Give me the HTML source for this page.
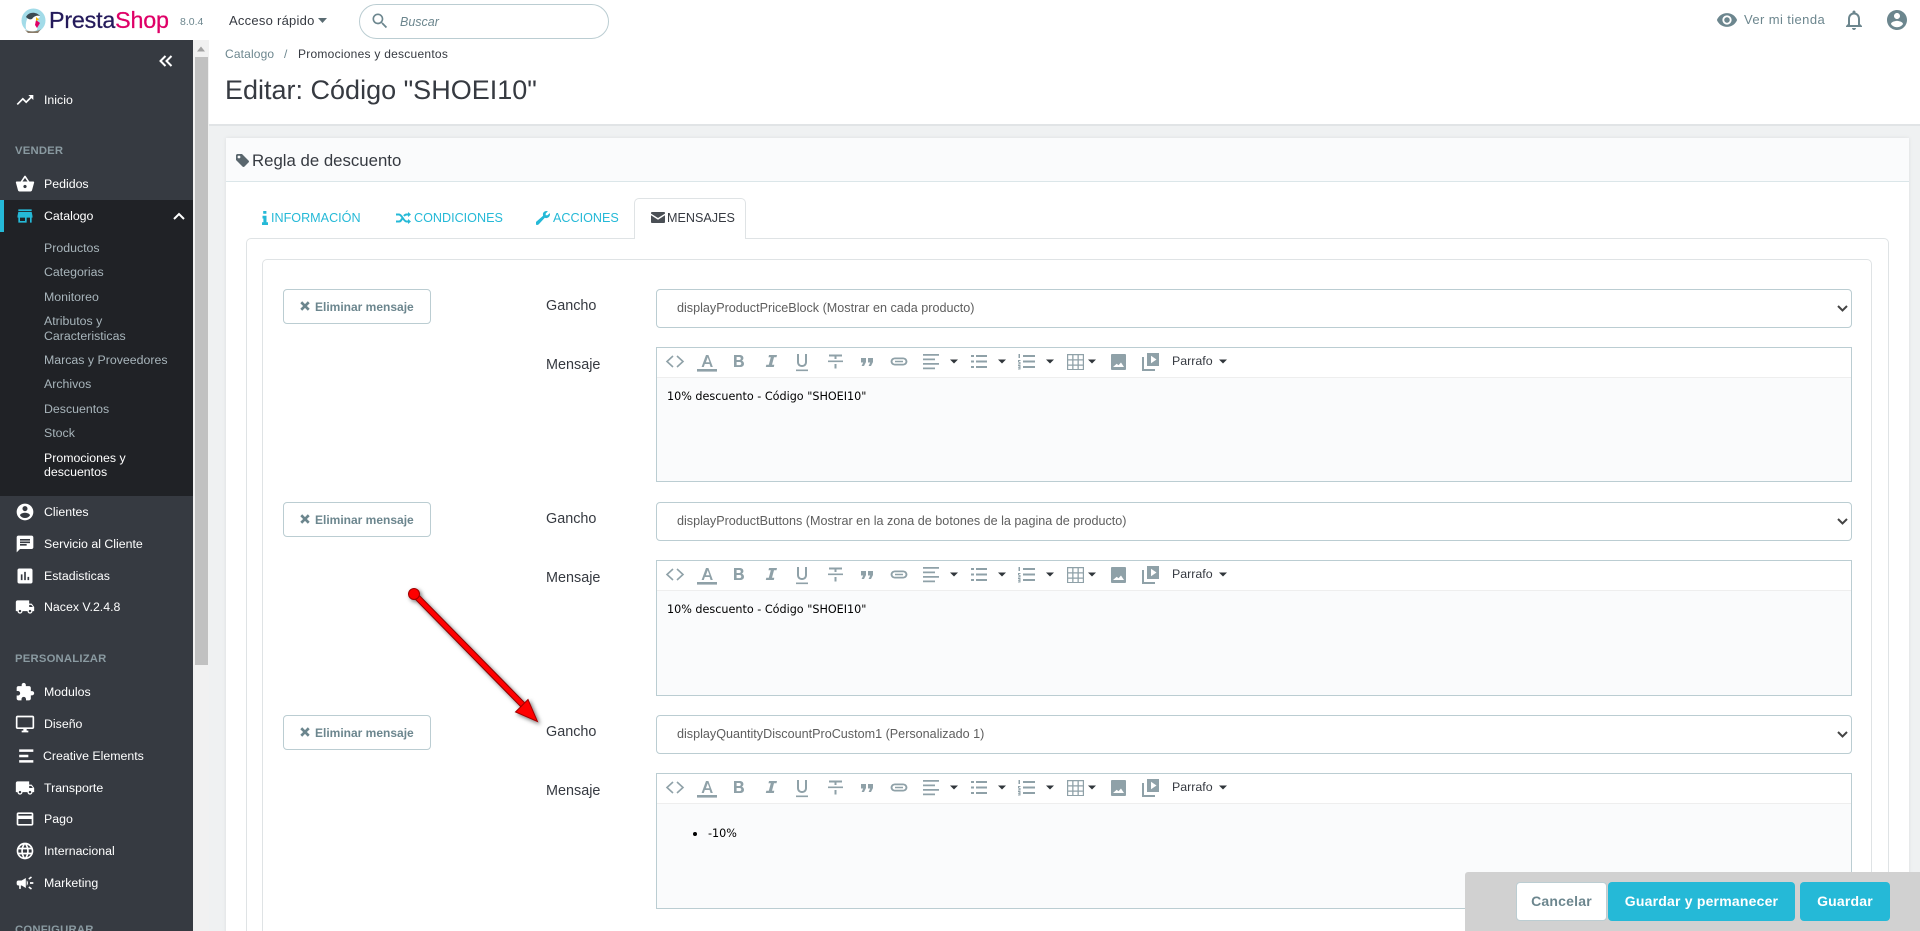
<!DOCTYPE html>
<html lang="es"><head><meta charset="utf-8"><title>Editar: Código "SHOEI10"</title>
<style>
html,body{margin:0;padding:0;width:1920px;height:931px;overflow:hidden;background:#eff1f2;font-family:"Liberation Sans",Arial,sans-serif}
#wrap{position:absolute;left:0;top:0;width:1920px;height:931px;overflow:hidden;background:#eff1f2}
.a{position:absolute}
.t{position:absolute;white-space:nowrap;line-height:16px;height:16px}
.s{font-size:12.35px;color:#fff;left:44px;margin-top:1px}
.u{font-size:12.35px;color:#a8b5bb;left:44px;margin-top:1px}
.h{font-size:11.3px;font-weight:bold;color:#8a9aa1;left:15px;letter-spacing:.2px;margin-top:1px}
.i{position:absolute;left:15px;width:20px;height:20px;fill:#fff;margin-top:1px}
.box{position:absolute;box-sizing:border-box;background:#fff}
.del{position:absolute;left:283px;width:148px;height:35px;box-sizing:border-box;border:1px solid #bbcdd2;border-radius:4px;background:#fff;color:#6c868e;font-size:12px;font-weight:bold;line-height:34px;padding-left:31px}
.sel{position:absolute;left:656px;width:1196px;height:39px;box-sizing:border-box;border:1px solid #bbcdd2;border-radius:4px;background:#fff;color:#5e5e5e;font-size:12.6px;line-height:36px;padding-left:20px}
.lab{position:absolute;left:546px;font-size:14.4px;color:#363a41;line-height:18px;white-space:nowrap;margin-top:1px}
.ed{position:absolute;left:656px;width:1196px;box-sizing:border-box;border:1px solid #bbcdd2;background:#fafbfc;overflow:hidden}
.tb{position:absolute;left:0;top:0;width:100%;height:29px;background:#fff;border-bottom:1px solid #eee}
.par{position:absolute;left:515px;top:5px;font-size:12.4px;line-height:16px;color:#363a41}
.ct{position:absolute;left:10px;top:41px;font:11.2px/16px "DejaVu Sans",sans-serif;color:#000;white-space:nowrap}
.tab{position:absolute;top:210px;font-size:12.6px;line-height:16px;color:#25b9d7;white-space:nowrap}
.btn{position:absolute;top:882px;height:39px;box-sizing:border-box;border-radius:4px;line-height:39px;text-align:center;font-size:14px;font-weight:bold;color:#fff;background:#25b9d7;letter-spacing:.2px}
</style></head><body><div id="wrap">
<svg width="0" height="0" style="position:absolute"><defs>
<symbol id="tbi" viewBox="656 347 600 30">
<g fill="none" stroke="#8fa1a8" stroke-width="1.6"><path d="M673 356l-6 5.500 6 5.500M677 356l6 5.500-6 5.500"/></g>
<g fill="#8fa1a8">
<path d="M706 355h2.400l4.400 12h-2.200l-1-3h-4.800l-1 3h-2.200zm-.1 7.300h3.600l-1.800-5z"/><rect x="697" y="369" width="20" height="2.600"/>
<path d="M734 355h5.600c2.400 0 3.800 1.200 3.800 3.100 0 1.200-.6 2.100-1.600 2.600 1.300.4 2.200 1.500 2.200 3 0 2.100-1.600 3.300-4 3.300h-6zm2.600 2v3h2.600c1 0 1.600-.6 1.600-1.500s-.6-1.500-1.600-1.500zm0 5v3.100h3c1 0 1.700-.6 1.700-1.550s-.7-1.550-1.700-1.550z"/>
<path d="M769 355h8l-.5 2.200h-2.500l-2 7.600h2.300l-.5 2.200h-8l.5-2.200h2.500l2-7.600h-2.300z"/>
<path d="M797 354h2v8c0 2 1.300 3 3 3s3-1 3-3v-8h2v8c0 3.300-2.300 5-5 5s-5-1.700-5-5zM796 369.500h12v1.600h-12z"/>
<path d="M829 354.500h13v2h-5.500v2.500h-2v-2.500h-5.500zM828 360.500h15v1.600h-15zM834.500 364h2v4.500h-2z"/>
<path d="M861 358h5v4l-2 4h-2.400l1.600-3.500h-2.200zM868 358h5v4l-2 4h-2.400l1.600-3.500h-2.200z"/>
<path d="M895 357.500h4v1.700h-4c-1.300 0-2.500 1-2.500 2.300s1.200 2.300 2.500 2.300h4v1.700h-4c-2.400 0-4.400-1.800-4.400-4s2-4 4.400-4zM903 357.500c2.400 0 4.400 1.800 4.400 4s-2 4-4.400 4h-4v-1.700h4c1.300 0 2.500-1 2.500-2.300s-1.200-2.300-2.500-2.300h-4v-1.700zM895 360.700h8v1.600h-8z"/>
<path d="M923 354h16v1.700h-16zM923 358.500h12v1.700h-12zM923 363h16v1.700h-16zM923 367.500h12v1.700h-12z"/>
<path d="M971 355h3v2h-3zM976 355h11v2h-11zM971 360.500h3v2h-3zM976 360.500h11v2h-11zM971 366h3v2h-3zM976 366h11v2h-11z"/>
<path d="M1023 355h12v2h-12zM1023 360.500h12v2h-12zM1023 366h12v2h-12zM1018.500 354h1.500v4h-1.500zM1018 360h2.500v1h-1.300v1h1.300v2.500h-2.500v-1h1.300v-1h-1.300zM1018 365h2.500v4.500h-2.500v-1h1.400v-.8h-1.400v-.9h1.400v-.8h-1.400z"/>
<path d="M1067 354h17v16h-17zm1.200 1.200v4h4v-4zm5.300 0v4h4v-4zm5.300 0v4h4v-4zm-10.600 5.300v4h4v-4zm5.300 0v4h4v-4zm5.300 0v4h4v-4zm-10.600 5.300v3.200h4v-3.200zm5.300 0v3.200h4v-3.200zm5.300 0v3.200h4v-3.200z"/>
<path d="M1112 354h13c.6 0 1 .4 1 1v14c0 .6-.4 1-1 1h-13c-.6 0-1-.4-1-1v-14c0-.6.4-1 1-1zm1 13h11l-3-4.500-2.500 2.800-1.800-1.600z" fill-rule="evenodd"/>
<path d="M1147 354h12v13h-12zm4 2.800v7.400l5.500-3.700zM1142 358h2v12h11v2h-13z" fill-rule="evenodd" transform="translate(0 -1)"/>
</g>
<g fill="#30363b">
<path d="M950 359.500h8l-4 4zM998 359.500h8l-4 4zM1046 359.500h8l-4 4zM1088 359.500h8l-4 4zM1219 359.500h8l-4 4z"/>
</g>
</symbol>
<symbol id="truck" viewBox="0 0 24 24"><path d="M20 8h-3V4H3c-1.100 0-2 .9-2 2v11h2c0 1.660 1.340 3 3 3s3-1.340 3-3h6c0 1.660 1.340 3 3 3s3-1.340 3-3h2v-5l-3-4zM6 18.500c-.83 0-1.500-.67-1.500-1.500s.67-1.500 1.500-1.500 1.500.67 1.500 1.500-.67 1.500-1.500 1.500zm13.500-9l1.960 2.500H17V9.500h2.500zm-1.500 9c-.83 0-1.500-.67-1.500-1.500s.67-1.500 1.500-1.500 1.500.67 1.500 1.500-.67 1.500-1.500 1.500z"/></symbol>
</defs></svg>

<!-- top bar -->
<div class="a" style="left:0;top:0;width:1920px;height:40px;background:#fff"></div>
<svg class="a" style="left:21px;top:8px" width="25" height="25" viewBox="0 0 25 25">
<circle cx="12.500" cy="12.500" r="12" fill="#a2dbe8"/><path d="M5 21c-1-6 1-13 6-15 4-1.500 7 0 8 3l-4 3 2 5-1 5c-3 2-8 2-11-1z" fill="#fff"/><path d="M5 9c2-5 10-6 14-1-3-1-6 0-8 3-2 1-4 0-6-2z" fill="#3b4a52"/><path d="M15 12l4 3-3 5-2-3z" fill="#df0067"/><path d="M15 9l3 2.500-3 1.500z" fill="#f7b500"/><path d="M4 22c4 2 12 2 16-1l-3 4H7z" fill="#8c7d6a"/>
</svg>
<div class="t" style="left:49px;top:4px;height:32px;line-height:32px;font-size:23.3px;color:#251b5b;letter-spacing:-.2px;-webkit-text-stroke:.25px #251b5b">Presta<span style="color:#df0067;-webkit-text-stroke:.25px #df0067">Shop</span></div>
<div class="t" style="left:180px;top:14px;font-size:10.5px;color:#6c868e">8.0.4</div>
<div class="t" style="left:229px;top:13px;font-size:13px;color:#363a41;letter-spacing:.25px">Acceso rápido</div>
<svg class="a" style="left:318px;top:18px" width="10" height="6"><path d="M0 0h9l-4.500 5z" fill="#5a6b72"/></svg>
<div class="box" style="left:359px;top:4px;width:250px;height:35px;border:1px solid #bbcdd2;border-radius:18px"></div>
<svg class="a" style="left:370px;top:11px;" width="20" height="20" viewBox="0 0 24 24" fill="#6c868e"><path d="M15.500 14h-.79l-.28-.27C15.410 12.590 16 11.110 16 9.500 16 5.910 13.090 3 9.500 3S3 5.910 3 9.500 5.910 16 9.500 16c1.610 0 3.090-.59 4.230-1.570l.27.28v.79l5 4.990L20.490 19l-4.990-5zm-6 0C7.010 14 5 11.990 5 9.500S7.010 5 9.500 5 14 7.010 14 9.500 11.990 14 9.500 14z"/></svg>
<div class="t" style="left:400px;top:14px;font-size:12.5px;font-style:italic;color:#6c868e">Buscar</div>
<svg class="a" style="left:1716px;top:9px" width="22" height="22" viewBox="0 0 24 24" fill="#6c868e"><path d="M12 4.500C7 4.500 2.730 7.610 1 12c1.730 4.390 6 7.500 11 7.500s9.270-3.110 11-7.500c-1.730-4.390-6-7.500-11-7.500zM12 17c-2.760 0-5-2.240-5-5s2.240-5 5-5 5 2.240 5 5-2.240 5-5 5zm0-8c-1.660 0-3 1.340-3 3s1.340 3 3 3 3-1.340 3-3-1.340-3-3-3z"/></svg>
<div class="t" style="left:1744px;top:12px;font-size:13px;color:#6c868e;letter-spacing:.4px">Ver mi tienda</div>
<svg class="a" style="left:1842px;top:8px" width="24" height="24" viewBox="0 0 24 24" fill="#6c868e"><path d="M12 22c1.100 0 2-.9 2-2h-4c0 1.100.9 2 2 2zm6-6v-5c0-3.070-1.630-5.640-4.500-6.320V4c0-.83-.67-1.500-1.500-1.500s-1.500.67-1.500 1.500v.68C7.640 5.360 6 7.920 6 11v5l-2 2v1h16v-1l-2-2zm-2 1H8v-6c0-2.480 1.510-4.500 4-4.500s4 2.020 4 4.500v6z"/></svg>
<svg class="a" style="left:1885px;top:8px" width="24" height="24" viewBox="0 0 24 24" fill="#6c868e"><path d="M12 2C6.480 2 2 6.480 2 12s4.480 10 10 10 10-4.480 10-10S17.520 2 12 2zm0 3c1.660 0 3 1.340 3 3s-1.340 3-3 3-3-1.340-3-3 1.340-3 3-3zm0 14.200c-2.500 0-4.710-1.280-6-3.220.03-1.990 4-3.080 6-3.080 1.990 0 5.970 1.090 6 3.080-1.290 1.940-3.500 3.220-6 3.220z"/></svg>

<!-- sidebar -->
<div class="a" style="left:0;top:40px;width:193px;height:891px;background:#363a41"></div>
<div class="a" style="left:0;top:200px;width:193px;height:296px;background:#202226"></div>
<div class="a" style="left:0;top:200px;width:4px;height:32px;background:#25b9d7"></div>
<svg class="a" style="left:159px;top:55px" width="14" height="12" viewBox="0 0 14 12" fill="none" stroke="#fff" stroke-width="2"><path d="M6.500 1L1.500 6l5 5M12.500 1L7.500 6l5 5"/></svg>

<svg class="i" style="top:89px" viewBox="0 0 24 24"><path d="M16 6l2.290 2.290-4.880 4.880-4-4L2 16.590 3.410 18l6-6 4 4 6.300-6.290L22 12V6z"/></svg>
<div class="t s" style="top:91px">Inicio</div>
<div class="t h" style="top:142px">VENDER</div>
<svg class="i" style="top:173px" viewBox="0 0 24 24"><path d="M17.210 9l-4.380-6.560c-.19-.28-.51-.42-.83-.42-.32 0-.64.14-.83.43L6.790 9H2c-.55 0-1 .45-1 1 0 .09.01.18.04.27l2.540 9.270c.23.84 1 1.460 1.920 1.460h13c.92 0 1.690-.62 1.930-1.460l2.540-9.270L23 10c0-.55-.45-1-1-1h-4.790zM9 9l3-4.400L15 9H9zm3 8c-1.100 0-2-.9-2-2s.9-2 2-2 2 .9 2 2-.9 2-2 2z"/></svg>
<div class="t s" style="top:175px">Pedidos</div>
<svg class="i" style="top:205px;fill:#25b9d7" viewBox="0 0 24 24"><path d="M20 4H4v2h16V4zm1 10v-2l-1-5H4l-1 5v2h1v6h10v-6h4v6h2v-6h1zm-9 4H6v-4h6v4z"/></svg>
<div class="t s" style="top:207px">Catalogo</div>
<svg class="a" style="left:173px;top:212px" width="12" height="8" fill="none" stroke="#fff" stroke-width="2"><path d="M1 7l5-5 5 5"/></svg>
<div class="t u" style="top:239px">Productos</div>
<div class="t u" style="top:263px">Categorias</div>
<div class="t u" style="top:288px">Monitoreo</div>
<div class="t u" style="top:312px">Atributos y</div>
<div class="t u" style="top:327px">Caracteristicas</div>
<div class="t u" style="top:351px">Marcas y Proveedores</div>
<div class="t u" style="top:375px">Archivos</div>
<div class="t u" style="top:400px">Descuentos</div>
<div class="t u" style="top:424px">Stock</div>
<div class="t u" style="top:449px;color:#fff">Promociones y</div>
<div class="t u" style="top:463px;color:#fff">descuentos</div>

<svg class="i" style="top:501px" viewBox="0 0 24 24"><path d="M12 2C6.480 2 2 6.480 2 12s4.480 10 10 10 10-4.480 10-10S17.520 2 12 2zm0 3c1.660 0 3 1.340 3 3s-1.340 3-3 3-3-1.340-3-3 1.340-3 3-3zm0 14.200c-2.500 0-4.710-1.280-6-3.220.03-1.990 4-3.080 6-3.080 1.990 0 5.970 1.090 6 3.080-1.290 1.940-3.500 3.220-6 3.220z"/></svg>
<div class="t s" style="top:503px">Clientes</div>
<svg class="i" style="top:533px" viewBox="0 0 24 24"><path d="M20 2H4c-1.100 0-1.990.9-1.990 2L2 22l4-4h14c1.100 0 2-.9 2-2V4c0-1.100-.9-2-2-2zM6 9h12v2H6V9zm8 5H6v-2h8v2zm4-6H6V6h12v2z"/></svg>
<div class="t s" style="top:535px">Servicio al Cliente</div>
<svg class="i" style="top:565px" viewBox="0 0 24 24"><path d="M19 3H5c-1.100 0-2 .9-2 2v14c0 1.100.9 2 2 2h14c1.100 0 2-.9 2-2V5c0-1.100-.9-2-2-2zM9 17H7v-7h2v7zm4 0h-2V7h2v10zm4 0h-2v-4h2v4z"/></svg>
<div class="t s" style="top:567px">Estadisticas</div>
<svg class="i" style="top:596px"><use href="#truck"/></svg>
<div class="t s" style="top:598px">Nacex V.2.4.8</div>
<div class="t h" style="top:650px">PERSONALIZAR</div>
<svg class="i" style="top:681px" viewBox="0 0 24 24"><path d="M20.500 11H19V7c0-1.100-.9-2-2-2h-4V3.500C13 2.120 11.880 1 10.500 1S8 2.120 8 3.500V5H4c-1.100 0-1.990.9-1.990 2v3.800H3.500c1.490 0 2.700 1.210 2.700 2.700s-1.210 2.700-2.700 2.700H2V20c0 1.100.9 2 2 2h3.800v-1.500c0-1.490 1.210-2.700 2.700-2.700 1.490 0 2.700 1.210 2.700 2.700V22H17c1.100 0 2-.9 2-2v-4h1.500c1.380 0 2.500-1.120 2.500-2.500S21.880 11 20.500 11z"/></svg>
<div class="t s" style="top:683px">Modulos</div>
<svg class="i" style="top:713px" viewBox="0 0 24 24"><path d="M21 2H3c-1.100 0-2 .9-2 2v12c0 1.100.9 2 2 2h7v2H8v2h8v-2h-2v-2h7c1.100 0 2-.9 2-2V4c0-1.100-.9-2-2-2zm0 14H3V4h18v12z"/></svg>
<div class="t s" style="top:715px">Diseño</div>
<svg class="i" style="top:745px" viewBox="0 0 24 24"><path d="M5 4h17v3H5zM5 10.500h11v3H5zM5 17h17v3H5z"/></svg>
<div class="t s" style="top:747px;left:43px">Creative Elements</div>
<svg class="i" style="top:777px"><use href="#truck"/></svg>
<div class="t s" style="top:779px">Transporte</div>
<svg class="i" style="top:808px" viewBox="0 0 24 24"><path d="M20 4H4c-1.110 0-1.990.89-1.990 2L2 18c0 1.110.89 2 2 2h16c1.110 0 2-.89 2-2V6c0-1.110-.89-2-2-2zm0 14H4v-6h16v6zm0-10H4V6h16v2z"/></svg>
<div class="t s" style="top:810px">Pago</div>
<svg class="i" style="top:840px" viewBox="0 0 24 24"><path d="M11.990 2C6.470 2 2 6.480 2 12s4.470 10 9.990 10C17.520 22 22 17.520 22 12S17.520 2 11.990 2zm6.930 6h-2.950c-.32-1.250-.78-2.450-1.380-3.560 1.840.63 3.370 1.910 4.330 3.560zM12 4.040c.83 1.200 1.480 2.530 1.910 3.960h-3.820c.43-1.430 1.080-2.760 1.910-3.960zM4.260 14C4.100 13.360 4 12.690 4 12s.1-1.360.26-2h3.380c-.08.66-.14 1.320-.14 2 0 .68.06 1.340.14 2H4.260zm.82 2h2.950c.32 1.250.78 2.450 1.380 3.560-1.840-.63-3.370-1.900-4.330-3.560zm2.950-8H5.080c.96-1.660 2.490-2.930 4.330-3.560C8.810 5.550 8.350 6.750 8.030 8zM12 19.960c-.83-1.200-1.480-2.530-1.910-3.960h3.820c-.43 1.430-1.080 2.760-1.910 3.960zM14.340 14H9.660c-.09-.66-.16-1.320-.16-2 0-.68.07-1.350.16-2h4.680c.09.65.16 1.320.16 2 0 .68-.07 1.340-.16 2zm.25 5.560c.6-1.110 1.060-2.310 1.380-3.560h2.950c-.96 1.650-2.490 2.930-4.330 3.560zM16.360 14c.08-.66.14-1.320.14-2 0-.68-.06-1.340-.14-2h3.380c.16.64.26 1.310.26 2s-.1 1.360-.26 2h-3.380z"/></svg>
<div class="t s" style="top:842px">Internacional</div>
<svg class="i" style="top:872px" viewBox="0 0 24 24"><path d="M18 11v2h4v-2h-4zm-2 6.610c.96.71 2.210 1.650 3.200 2.390.4-.53.8-1.070 1.200-1.600-.99-.74-2.240-1.680-3.200-2.400-.4.54-.8 1.080-1.200 1.610zM20.400 5.600c-.4-.53-.8-1.070-1.200-1.600-.99.74-2.240 1.680-3.200 2.400.4.53.8 1.070 1.200 1.600.96-.72 2.210-1.650 3.200-2.400zM4 9c-1.100 0-2 .9-2 2v2c0 1.100.9 2 2 2h1v4h2v-4h1l5 3V6L8 9H4zm11.500 3c0-1.330-.58-2.530-1.500-3.350v6.690c.92-.81 1.500-2.010 1.500-3.340z"/></svg>
<div class="t s" style="top:874px">Marketing</div>
<div class="t h" style="top:921px">CONFIGURAR</div>

<!-- scrollbar -->
<div class="a" style="left:193px;top:40px;width:16px;height:891px;background:#f1f1f1"></div>
<div class="a" style="left:195px;top:57px;width:13px;height:608px;background:#c1c1c1"></div>
<svg class="a" style="left:197px;top:46px" width="9" height="6"><path d="M0 5.500h8L4 .5z" fill="#a3a3a3"/></svg>

<!-- page head -->
<div class="a" style="left:209px;top:40px;width:1711px;height:84px;background:#fff;border-bottom:2px solid #e1e4e6;box-sizing:content-box"></div>
<div class="t" style="left:225px;top:46px;font-size:12px;color:#6c868e;letter-spacing:.15px">Catalogo</div>
<div class="t" style="left:284px;top:46px;font-size:12px;color:#6c868e">/</div>
<div class="t" style="left:298px;top:46px;font-size:12px;color:#363a41;letter-spacing:.25px">Promociones y descuentos</div>
<div class="t" style="left:225px;top:71px;height:38px;line-height:38px;font-size:27px;color:#363a41">Editar: Código "SHOEI10"</div>

<!-- panel -->
<div class="box" style="left:226px;top:138px;width:1683px;height:800px;box-shadow:0 0 4px rgba(0,0,0,.08)"></div>
<div class="a" style="left:226px;top:138px;width:1683px;height:44px;box-sizing:border-box;background:#fafbfc;border-bottom:1px solid #dbe6e9"></div>
<svg class="a" style="left:236px;top:154px" width="13" height="13" viewBox="0 0 13 13" fill="#59666d"><path d="M0 1.500C0 .7.7 0 1.500 0H6l6.600 6.600c.5.500.5 1.300 0 1.800l-4.200 4.200c-.5.500-1.300.5-1.800 0L0 6zM3 4.400a1.400 1.400 0 1 0 0-2.800 1.400 1.400 0 0 0 0 2.800z" fill-rule="evenodd"/></svg>
<div class="t" style="left:252px;top:153px;font-size:16.8px;color:#363a41">Regla de descuento</div>

<!-- tabs -->
<div class="box" style="left:246px;top:238px;width:1643px;height:720px;border:1px solid #dfe3e5;border-radius:5px"></div>
<div class="box" style="left:634px;top:198px;width:112px;height:41px;border:1px solid #dfe3e5;border-bottom:0;border-radius:5px 5px 0 0"></div>
<div class="box" style="left:262px;top:259px;width:1610px;height:700px;border:1px solid #dfe3e5;border-radius:5px"></div>
<svg class="a" style="left:262px;top:211px" width="6" height="14" viewBox="0 0 6 14" fill="#25b9d7"><path d="M1.200 0h3.200v2.800H1.200zM.5 4.700h4v6.500H6V14H0v-2.800h1.400V7.500H.5z"/></svg>
<div class="tab" style="left:271px">INFORMACIÓN</div>
<svg class="a" style="left:396px;top:212px" width="15" height="12" viewBox="0 0 15 12" fill="none" stroke="#25b9d7" stroke-width="2"><path d="M0 2.500h3c3 0 4.500 7 7.500 7H13M0 9.500h3c1.500 0 2.500-1.500 3-3M8 4c.7-1 1.500-1.500 2.500-1.500H13"/><path d="M12 0l3 2.500-3 2.500zM12 7l3 2.500-3 2.500z" fill="#25b9d7" stroke="none"/></svg>
<div class="tab" style="left:414px">CONDICIONES</div>
<svg class="a" style="left:536px;top:211px" width="14" height="14" viewBox="0 0 14 14" fill="#25b9d7"><path d="M14 3.300c0 2.100-1.700 3.800-3.800 3.800-.5 0-1-.1-1.400-.3L2.800 13.300c-.9.900-2.300.9-3 .1-.6-.8-.4-2 .4-2.700l6.900-5.900C7 4.300 6.900 3.800 6.900 3.300 6.900 1.500 8.400 0 10.500 0c.5 0 1 .1 1.400.3L9.700 2.500v1.800h1.800L13.700 2.100c.2.400.3.800.3 1.200z"/></svg>
<div class="tab" style="left:553px">ACCIONES</div>
<svg class="a" style="left:651px;top:212px" width="14" height="11" viewBox="0 0 14 11" fill="#4a4f55"><path d="M0 1C0 .4.4 0 1 0h12c.6 0 1 .4 1 1v.6L7 6 0 1.600zM0 3.300V10c0 .6.4 1 1 1h12c.6 0 1-.4 1-1V3.300L7 7.700z"/></svg>
<div class="tab" style="left:667px;color:#363a41">MENSAJES</div>

<!-- row 1 -->
<div class="del" style="top:289px">Eliminar mensaje</div>
<svg class="a" style="left:300px;top:301px" width="10" height="10" fill="#6c868e"><path d="M2.200.3L5 3.100 7.800.3l1.900 1.900L6.900 5l2.800 2.800-1.900 1.900L5 6.900 2.200 9.700.3 7.800 3.100 5 .3 2.200z"/></svg>
<div class="lab" style="top:296px">Gancho</div>
<div class="sel" style="top:289px">displayProductPriceBlock (Mostrar en cada producto)</div>
<svg class="a" style="left:1837px;top:305px" width="11" height="7" fill="none" stroke="#444" stroke-width="2"><path d="M1 1l4.500 4.500L10 1"/></svg>
<div class="lab" style="top:355px">Mensaje</div>
<div class="ed" style="top:347px;height:135px"><div class="tb"><svg class="a" style="left:-1px;top:-1px" width="600" height="30"><use href="#tbi"/></svg><div class="par">Parrafo</div></div><div class="ct">10% descuento - Código "SHOEI10"</div></div>

<!-- row 2 -->
<div class="del" style="top:502px">Eliminar mensaje</div>
<svg class="a" style="left:300px;top:514px" width="10" height="10" fill="#6c868e"><path d="M2.200.3L5 3.100 7.800.3l1.900 1.900L6.900 5l2.800 2.800-1.900 1.900L5 6.900 2.200 9.700.3 7.800 3.100 5 .3 2.200z"/></svg>
<div class="lab" style="top:509px">Gancho</div>
<div class="sel" style="top:502px">displayProductButtons (Mostrar en la zona de botones de la pagina de producto)</div>
<svg class="a" style="left:1837px;top:518px" width="11" height="7" fill="none" stroke="#444" stroke-width="2"><path d="M1 1l4.500 4.500L10 1"/></svg>
<div class="lab" style="top:568px">Mensaje</div>
<div class="ed" style="top:560px;height:136px"><div class="tb"><svg class="a" style="left:-1px;top:-1px" width="600" height="30"><use href="#tbi"/></svg><div class="par">Parrafo</div></div><div class="ct">10% descuento - Código "SHOEI10"</div></div>

<!-- row 3 -->
<div class="del" style="top:715px">Eliminar mensaje</div>
<svg class="a" style="left:300px;top:727px" width="10" height="10" fill="#6c868e"><path d="M2.200.3L5 3.100 7.800.3l1.900 1.900L6.900 5l2.800 2.800-1.900 1.900L5 6.900 2.200 9.700.3 7.800 3.100 5 .3 2.200z"/></svg>
<div class="lab" style="top:722px">Gancho</div>
<div class="sel" style="top:715px">displayQuantityDiscountProCustom1 (Personalizado 1)</div>
<svg class="a" style="left:1837px;top:731px" width="11" height="7" fill="none" stroke="#444" stroke-width="2"><path d="M1 1l4.500 4.500L10 1"/></svg>
<div class="lab" style="top:781px">Mensaje</div>
<div class="ed" style="top:773px;height:136px"><div class="tb"><svg class="a" style="left:-1px;top:-1px" width="600" height="30"><use href="#tbi"/></svg><div class="par">Parrafo</div></div>
<div class="a" style="left:36px;top:58px;width:4px;height:4px;border-radius:50%;background:#000"></div>
<div class="ct" style="left:51px;top:52px">-10%</div></div>

<!-- arrow -->
<svg class="a" style="left:400px;top:580px" width="150" height="155" viewBox="400 580 150 155">
<defs><filter id="sh" x="-20%" y="-20%" width="150%" height="150%"><feDropShadow dx="2" dy="2" stdDeviation="2" flood-color="#000" flood-opacity=".55"/></filter></defs>
<g filter="url(#sh)">
<path d="M414 594L523 705" stroke="#8a0000" stroke-width="6.500" fill="none"/>
<path d="M414 594L523 705" stroke="#f00" stroke-width="4.500" fill="none"/>
<circle cx="414" cy="594" r="5.500" fill="#f00" stroke="#a00000"/>
<path d="M528 699.500L515.500 712 537.500 721.500z" fill="#f00" stroke="#a00000" stroke-width="1"/>
</g></svg>

<!-- footer bar -->
<div class="a" style="left:1465px;top:872px;width:455px;height:59px;background:#d1d1d1;border-radius:3px 0 0 0"></div>
<div class="btn" style="left:1516px;width:91px;background:#fff;color:#6c868e;border:1px solid #bbcdd2;line-height:37px">Cancelar</div>
<div class="btn" style="left:1608px;width:187px">Guardar y permanecer</div>
<div class="btn" style="left:1800px;width:90px">Guardar</div>
</div></body></html>
